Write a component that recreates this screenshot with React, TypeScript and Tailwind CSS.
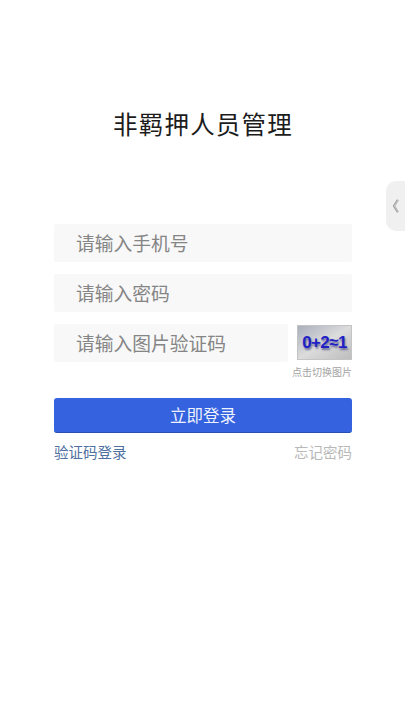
import React from 'react';

const cjk = { fontFamily: '"Noto Sans CJK SC", "Liberation Sans", sans-serif' };

const Field = ({ label, className }: { label: string; className?: string }) => (
  <div className={`h-[38px] bg-[#f8f8f8] rounded-[2px] flex items-center pl-[22px] text-[18.75px] text-[#858585] ${className ?? ''}`}>
    {label}
  </div>
);

const App: React.FC = () => {
  return (
    <div className="relative w-[405px] h-[720px] bg-white overflow-hidden" style={cjk}>
      {/* side tab */}
      <div className="absolute right-0 top-[181px] w-[19px] h-[50px] bg-[#f0f0f0] rounded-l-[10px] flex items-center justify-center">
        <svg width="7" height="16" viewBox="0 0 7 16" fill="none" stroke="#a0a0a0" strokeWidth="1.3">
          <path d="M5.5 1.5 L1.5 8 L5.5 14.5" />
          <path d="M6.5 2 L3 8 L6.5 14" strokeWidth="0.7" />
        </svg>
      </div>

      <h1 className="pt-[109px] h-[224px] text-center text-[24.5px] leading-[30px] font-normal tracking-[1.2px] text-[#1c1c1c] pl-[1px]">
        非羁押人员管理
      </h1>

      <div className="ml-[54px] w-[298px] flex flex-col">
        <Field label="请输入手机号" />
        <Field label="请输入密码" className="mt-[12px]" />
        <div className="mt-[12px] flex items-center justify-between">
          <Field label="请输入图片验证码" className="w-[234px]" />
          <div className="mb-[1px] w-[55px] h-[35px] border border-[#c4c4c4] bg-gradient-to-br from-[#a9afbc] via-[#dcdcdc] to-[#bdbdbd] flex items-center justify-center overflow-hidden">
            <span className="text-[17px] font-bold tracking-[-0.6px] text-[#1f1fc4] [text-shadow:1px_2px_2px_#6a6a9a]" style={{ fontFamily: '"Liberation Sans Narrow", "Liberation Sans", sans-serif' }}>
              0+2≈1
            </span>
          </div>
        </div>
        <div className="mt-[3px] h-[14px] leading-[14px] text-right text-[10px] text-[#a3a3a3]">点击切换图片</div>

        <button className="mt-[19px] h-[35px] w-full bg-[#3563e0] border-b border-[#2a4fb4] rounded-[3px] text-[#eef2fd] text-[16.5px] leading-[33px]">
          立即登录
        </button>

        <div className="mt-[9px] flex justify-between text-[14.5px] leading-[20px]">
          <span className="text-[#4f709f]">验证码登录</span>
          <span className="text-[#b8b8b8]">忘记密码</span>
        </div>
      </div>
    </div>
  );
};

export default App;
